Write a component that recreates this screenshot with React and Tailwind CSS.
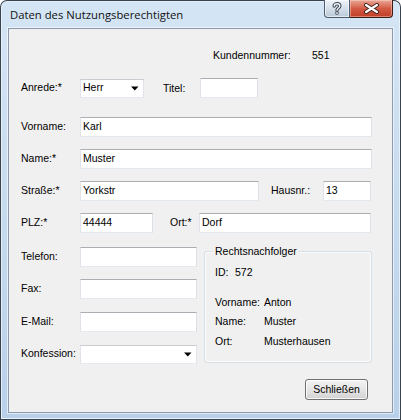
import React from 'react';

function TextBox({ w, value }) {
  return (
    <div
      className={`${w} h-[20px] shrink-0 bg-white border border-[#e2e3ea] border-t-[#abadb3] border-r-[#dbdfe6] border-b-[#e3e9ef] flex items-center pl-[2px]`}
    >
      {value}
    </div>
  );
}

function ComboBox({ w, value }) {
  return (
    <div
      className={`${w} h-[19px] shrink-0 bg-white border border-[#e2e3ea] border-t-[#c9cbd1] border-b-[#e3e9ef] flex items-center justify-between pl-[2px] pr-[4px]`}
    >
      <span>{value}</span>
      <svg width="8" height="5" viewBox="0 0 8 5">
        <path d="M0 0.5 H7.5 L3.75 4.5 Z" fill="#000" />
      </svg>
    </div>
  );
}

function Row({ label, children, className = '' }) {
  return (
    <div className={`h-[20px] flex items-center ${className}`}>
      <span className="w-[59px] shrink-0">{label}</span>
      {children}
    </div>
  );
}

export default function App() {
  return (
    <div className="relative w-[401px] h-[420px] rounded-t-[7px] bg-[#39434d] p-px font-['Liberation_Sans',Arial,sans-serif] text-[10.5px] text-black">
      <div className="flex flex-col w-full h-full rounded-t-[6px] border border-[#eef5fb]/80 bg-gradient-to-b from-[#d4e5f5] via-[#c7dbef] to-[#b8d0e9]">
        {/* Titelleiste */}
        <div className="h-[26px] flex items-center pl-[8px] pt-[1px] font-['Open_Sans',sans-serif] text-[11.3px] text-[#111]">
          Daten des Nutzungsberechtigten
        </div>

        {/* Client-Bereich */}
        <div className="mx-[6px] h-[385px] border border-[#8c9aab] bg-[#f0f0f0] shadow-[0_0_0_1px_rgba(255,255,255,0.6)]">
          <div className="pl-[12px] pt-[17px]">
            <div className="h-[20px] flex items-center">
              <span className="ml-[192px] w-[99px]">Kundennummer:</span>
              <span>551</span>
            </div>

            <Row label="Anrede:*" className="mt-[12px]">
              <ComboBox w="w-[64px]" value="Herr" />
              <span className="ml-[19px] w-[37px] pt-[2px]">Titel:</span>
              <TextBox w="w-[58px]" />
            </Row>

            <Row label="Vorname:" className="mt-[19px]">
              <TextBox w="w-[292px]" value="Karl" />
            </Row>

            <Row label="Name:*" className="mt-[12px]">
              <TextBox w="w-[292px]" value="Muster" />
            </Row>

            <Row label="Straße:*" className="mt-[12px]">
              <TextBox w="w-[179px]" value="Yorkstr" />
              <span className="ml-[12px] w-[52px]">Hausnr.:</span>
              <TextBox w="w-[48px]" value="13" />
            </Row>

            <Row label="PLZ:*" className="mt-[12px]">
              <TextBox w="w-[73px]" value="44444" />
              <span className="ml-[17px] w-[29px]">Ort:*</span>
              <TextBox w="w-[172px]" value="Dorf" />
            </Row>

            <div className="mt-[14px] flex items-start">
              <div className="w-[176px]">
                <Row label="Telefon:">
                  <TextBox w="w-[117px]" />
                </Row>
                <Row label="Fax:" className="mt-[12px]">
                  <TextBox w="w-[117px]" />
                </Row>
                <Row label="E-Mail:" className="mt-[13px]">
                  <TextBox w="w-[117px]" />
                </Row>
                <Row label="Konfession:" className="mt-[12px]">
                  <ComboBox w="w-[117px]" value="" />
                </Row>
              </div>

              {/* Gruppe Rechtsnachfolger */}
              <div className="relative ml-[7px] mt-[4px] w-[168px] h-[112px] rounded-[3px] border border-[#d5dfe5] shadow-[inset_0_0_0_1px_rgba(255,255,255,0.7)] pl-[10px] pt-[11px]">
                <span className="absolute -top-[7px] left-[8px] bg-[#f0f0f0] px-[2px] leading-[12px]">
                  Rechtsnachfolger
                </span>
                <div className="h-[20px] flex items-center">
                  <span className="w-[20px]">ID:</span>
                  <span>572</span>
                </div>
                <div className="mt-[10px] h-[19px] flex items-center">
                  <span className="w-[49px]">Vorname:</span>
                  <span>Anton</span>
                </div>
                <div className="h-[20px] flex items-center">
                  <span className="w-[49px]">Name:</span>
                  <span>Muster</span>
                </div>
                <div className="h-[20px] flex items-center">
                  <span className="w-[49px]">Ort:</span>
                  <span>Musterhausen</span>
                </div>
              </div>
            </div>

            <div className="mt-[15px] flex justify-end pr-[24px]">
              <button className="w-[63px] h-[21px] rounded-[3px] border border-[#707070] bg-gradient-to-b from-[#f3f3f3] via-[#e6e6e6] to-[#d2d2d2] shadow-[inset_0_0_0_1px_rgba(255,255,255,0.8)] flex items-center justify-center">
                Schließen
              </button>
            </div>
          </div>
        </div>
      </div>

      {/* Titelleisten-Buttons */}
      <div className="absolute top-0 right-[8px] flex">
        <div className="w-[26px] h-[18px] rounded-bl-[4px] border border-t-0 border-[#4e5d6e] bg-gradient-to-b from-[#eef3f8] via-[#d5e0ea] to-[#b9c8d8] shadow-[inset_0_0_0_1px_rgba(255,255,255,0.6)] flex items-center justify-center">
          <svg width="10" height="13" viewBox="0 0 10 13">
            <path
              d="M2.2 4 C2.2 1 7.8 1 7.8 4 C7.8 6 5 6 5 8.3"
              fill="none"
              stroke="#3b4450"
              strokeWidth="3.4"
              strokeLinecap="round"
            />
            <circle cx="5" cy="11" r="1.8" fill="#3b4450" />
            <path
              d="M2.2 4 C2.2 1 7.8 1 7.8 4 C7.8 6 5 6 5 8.3"
              fill="none"
              stroke="#f4f6f8"
              strokeWidth="1.4"
              strokeLinecap="round"
            />
            <circle cx="5" cy="11" r="0.9" fill="#f4f6f8" />
          </svg>
        </div>
        <div className="w-[43px] h-[18px] rounded-br-[4px] border border-t-0 border-l-0 border-[#3d1a14] bg-gradient-to-b from-[#e9a898] via-[#d35a44] to-[#c03d26] shadow-[inset_0_0_0_1px_rgba(255,220,210,0.45)] flex items-center justify-center">
          <svg width="17" height="11" viewBox="0 0 17 11">
            <path
              d="M3 2 L14 9 M14 2 L3 9"
              stroke="#3a1d18"
              strokeWidth="4"
              strokeLinecap="round"
            />
            <path
              d="M3 2 L14 9 M14 2 L3 9"
              stroke="#ffffff"
              strokeWidth="2.2"
              strokeLinecap="round"
            />
          </svg>
        </div>
      </div>
    </div>
  );
}
